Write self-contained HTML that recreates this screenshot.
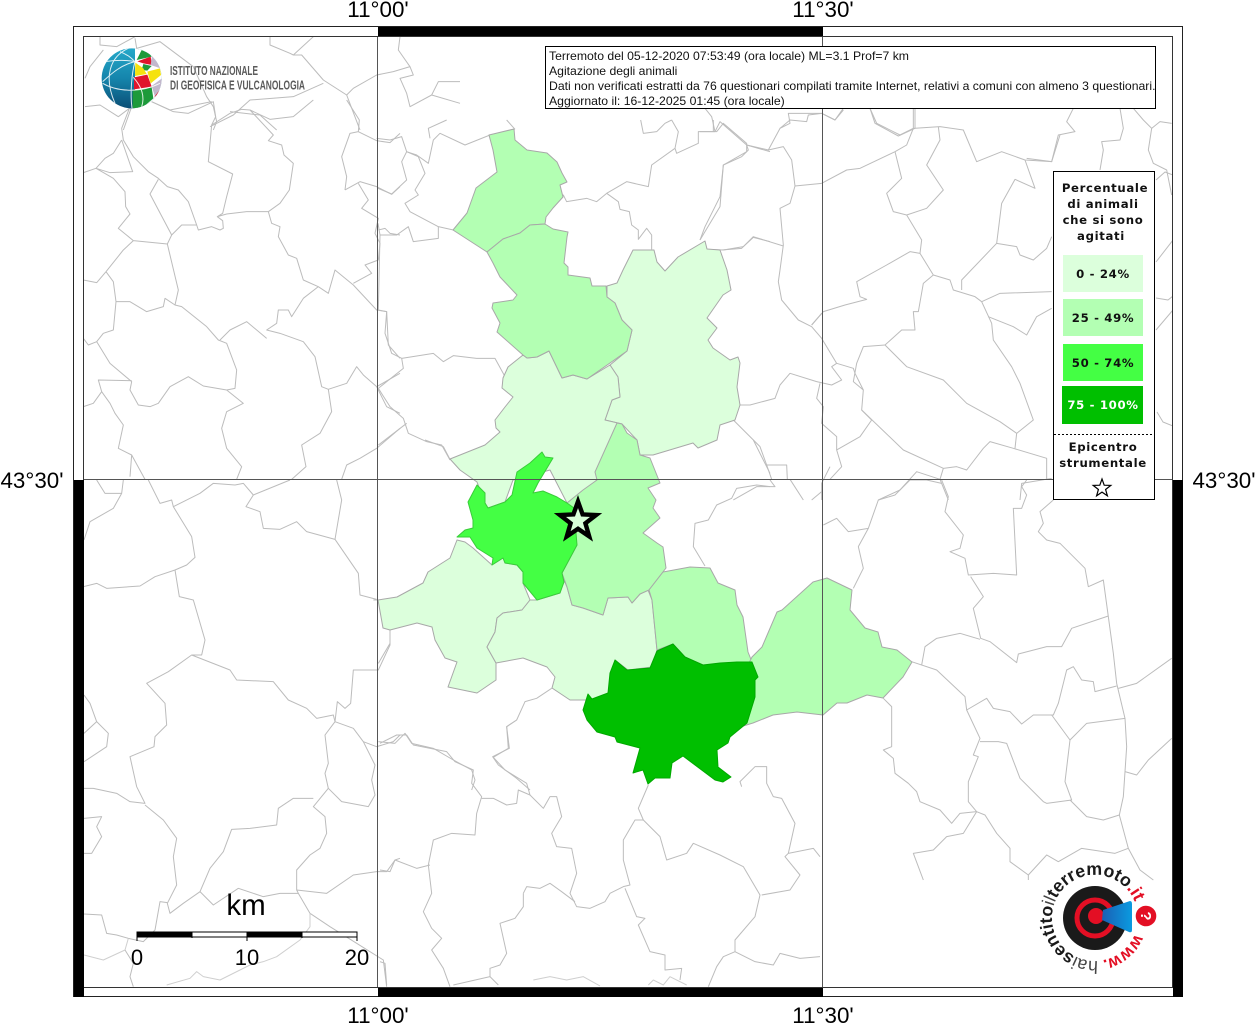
<!DOCTYPE html>
<html><head><meta charset="utf-8"><style>
html,body{margin:0;padding:0;background:#fff}
svg{display:block}
.b{fill:none;stroke:#bcbcbc;stroke-width:1;stroke-linejoin:round}
.b path{vector-effect:non-scaling-stroke}
.p{stroke:#a8a8a8;stroke-width:1;stroke-linejoin:round}
.l{font-family:"Liberation Sans",sans-serif;fill:#000}
.t{font-family:"Liberation Sans",sans-serif;font-size:12.22px;fill:#111}
.g{font-family:"DejaVu Sans",sans-serif;font-weight:bold;font-size:11.7px;letter-spacing:.65px;fill:#111;text-anchor:middle}
</style></head><body>
<svg width="1256" height="1024" viewBox="0 0 1256 1024" xmlns="http://www.w3.org/2000/svg">
<defs>
<clipPath id="m"><rect x="84" y="37" width="1089" height="950"/></clipPath>
<clipPath id="sc"><circle cx="215" cy="235" r="90"/></clipPath>
<linearGradient id="bl" x1="0" y1="0" x2="0" y2="1"><stop offset="0" stop-color="#25a8c9"/><stop offset=".5" stop-color="#1585ac"/><stop offset="1" stop-color="#0b4f76"/></linearGradient>
<linearGradient id="cone" x1="0" y1="0" x2="1" y2="0"><stop offset="0" stop-color="#1a5fb4"/><stop offset="1" stop-color="#0a9be0"/></linearGradient>
<path id="arc" d="M1136.5 929A43 43 0 1 1 1137.3 910.5"/>
</defs>
<rect width="1256" height="1024" fill="#fff"/>
<g clip-path="url(#m)">
<g class="b" transform="translate(80,100) scale(.33333)">
<path d="M150,20 125,85 130,120 160,170 205,215 235,235 262,260 295,270 325,305 350,375 355,390 395,380 420,390 430,385 428,362 412,350 440,342 500,335 565,335 600,310 628,270 640,190 612,165 605,135 565,122 580,105 510,30 485,28 450,40 395,75 385,185 458,222 440,290 428,340 412,350"/>
<path d="M215,5 280,35 325,40 400,5 407,50 395,75"/>
<path d="M510,30 570,58 640,50 700,0"/>
<path d="M125,120 100,160 75,175 48,205 10,218"/>
<path d="M125,120 158,215 90,218 48,205 100,235 135,275 137,320 150,342 115,385 160,422 262,432 275,405 305,375 350,375"/>
<path d="M235,238 210,282 230,320 275,405"/>
<path d="M160,422 130,450 78,515 50,548 10,540"/>
<path d="M262,432 295,570 285,615 305,620 380,680 415,720 440,730 470,810 465,865 440,870"/>
<path d="M78,515 100,545 108,605 150,605 200,635 250,620 255,595 285,615"/>
<path d="M108,605 100,690 70,700 50,725 25,735 10,715"/>
<path d="M50,725 90,790 155,845 150,870 175,915 210,920 235,910 270,860 325,830 370,858 440,870 490,910 440,935 425,985 440,1045 485,1100 470,1138"/>
<path d="M155,842 55,840 65,875 90,910 105,940 130,975 115,1045 155,1065 195,1138"/>
<path d="M65,875 40,910 10,920"/>
<path d="M155,1065 150,1130"/>
<path d="M565,335 575,370 600,380 595,410 625,465 650,475 670,540 715,560 745,580 765,510 820,555 890,630 920,635 925,735 960,775"/>
<path d="M715,560 670,595 635,650 625,630 595,630 590,670 560,690 600,700 670,725 705,770 725,860 745,868 800,850 830,800 850,825 890,860 960,820"/>
<path d="M420,720 450,690 500,665 560,715"/>
<path d="M745,868 755,935 720,1000 665,1035 678,1100 635,1138"/>
<path d="M890,860 920,920 960,940"/>
<path d="M890,1045 840,1075 800,1095 785,1138"/>
<path d="M890,1045 960,985"/>
<path d="M800,0 838,60 835,95 810,100 785,170 800,230 795,270"/>
<path d="M835,95 890,122 930,128 960,100"/>
<path d="M795,270 840,245 890,260 935,283 960,260"/>
<path d="M835,250 865,300 845,325 895,355 885,400 900,430 895,480 855,495 875,520 820,550"/>
<path d="M895,390 915,385 930,400 960,405"/>
</g>
<g class="b" transform="translate(80,480) scale(.33333)">
<path d="M50,0 75,40 125,40 130,0"/>
<path d="M125,40 100,85 30,125 12,180"/>
<path d="M205,0 240,70 275,60 280,80 335,170 345,232 320,255 285,270 225,290 180,318 80,325 50,310 10,320"/>
<path d="M280,80 360,40 400,10 465,15 490,10 520,45 630,0"/>
<path d="M520,45 498,80 540,95 550,145 600,148 650,125 680,155 765,178 785,60 770,0"/>
<path d="M765,178 835,280 840,345 890,358"/>
<path d="M285,270 298,350 340,360 375,480 365,525 335,525 265,575 200,610 255,670 260,735 225,770 222,800 150,830 170,920 195,970 150,965 110,940 40,925 10,925"/>
<path d="M335,525 450,570 470,600 580,605 625,660 680,685 710,715 760,705 765,725"/>
<path d="M930,450 930,495 895,570 820,570 812,670 795,685 772,665 765,725"/>
<path d="M765,725 735,765 745,850 735,880 745,925 785,965 865,980 885,945 875,900 885,855 850,785 820,745 765,725"/>
<path d="M850,785 890,800 940,785 960,765"/>
<path d="M745,925 700,980 735,1010 740,1060 720,1105 690,1125 650,1170 650,1230 655,1240 600,1240 550,1250 475,1225 400,1275 360,1235 310,1270 270,1300 262,1270 290,1215 280,1130 290,1075 250,1020 195,975"/>
<path d="M700,955 640,955 595,985 590,1035 510,1045 455,1048 430,1115 390,1165 360,1235"/>
<path d="M650,1230 740,1240 820,1185 890,1175 920,1175 945,1140 960,1135"/>
<path d="M655,1240 690,1300 750,1340 830,1390 910,1440 920,1520"/>
<path d="M690,1300 690,1340 660,1380 590,1430 550,1445 510,1455 420,1500 370,1490 350,1475 330,1495 260,1515" style="stroke:#cfcfcf"/>
<path d="M262,1268 240,1265 225,1350 190,1385 145,1375 110,1365 80,1360 65,1305 12,1302"/>
<path d="M145,1375 135,1410 70,1440 12,1425" style="stroke:#cfcfcf"/>
<path d="M135,1410 160,1450 150,1490 160,1520"/>
<path d="M12,645 30,670 50,725 85,760 80,800 12,845"/>
<path d="M50,725 12,760"/>
<path d="M12,1015 65,1010 50,1040 65,1070 35,1120 12,1120"/>
</g>
<g class="b" transform="translate(370,120) scale(.33333)">
<path d="M20,55 60,60 95,50 110,95 145,110 165,160 135,210 145,225 105,250 120,275 205,320 250,330"/>
<path d="M360,45 285,75 210,40 190,60 175,130 140,105 110,95 95,125 110,180 65,222 24,205"/>
<path d="M205,320 205,355 130,365 115,320 80,345 30,345 24,310"/>
<path d="M30,345 25,570 50,575 45,640 65,700 95,715 190,700 220,725 250,707 320,715 375,715 405,770"/>
<path d="M95,715 100,745 25,805"/>
<path d="M25,805 60,860 100,895 115,940 170,965 215,975 240,1020"/>
<path d="M110,910 25,975"/>
<path d="M435,28 410,0"/>
<path d="M180,55 175,25 230,0"/>
<path d="M528,290 580,225 590,245 650,235 680,245 710,220 745,245 750,268 778,275 785,315 805,330 805,358 830,325 845,345 845,388"/>
<path d="M710,220 770,185 835,200 845,135 915,85 925,35 905,0"/>
<path d="M915,85 920,100 985,70 985,35 1040,35 1060,10 1130,70 1130,95 1060,135 1050,260 990,360"/>
<path d="M1130,75 1200,95"/>
<path d="M1010,388 1060,390 1120,380 1150,352 1200,365"/>
<path d="M812,0 820,40 860,35 885,10 905,0"/>
<path d="M1030,35 1030,0"/>
</g>
<g class="b" transform="translate(60,0) scale(.33333)">
<path d="M120,110 120,135 170,140 225,110"/>
<path d="M225,115 230,145 300,125 400,200 440,290 460,320 470,365 460,390"/>
<path d="M630,110 630,135 690,160 700,165 760,110"/>
<path d="M700,165 725,165 790,240 860,285 900,390"/>
<path d="M860,285 880,265 950,225 1000,215 1050,200 1015,150 1020,110"/>
<path d="M1050,200 1060,225 1020,235 1040,280 1050,320 1115,285 1200,310"/>
<path d="M1115,285 1135,245 1200,245"/>
<path d="M790,250 700,290 570,300 520,345 450,380"/>
<path d="M510,335 600,345 650,390"/>
<path d="M275,305 330,330 455,305"/>
<path d="M75,320 120,315 175,350 215,320 190,390"/>
<path d="M130,150 90,200 75,235"/>
</g>
<g class="b" transform="translate(370,440) scale(.33333)">
<path d="M165,0 220,20 240,58"/>
<path d="M25,480 10,480"/>
<path d="M60,570 60,610 25,670"/>
<path d="M545,745 500,775 465,785 440,840 410,860 418,925 368,950 385,975 440,1015 480,1050"/>
<path d="M25,905 75,910 105,880 125,910 190,925 250,960 305,990 315,1020 305,1050"/>
<path d="M1150,0 1200,100"/>
<path d="M1005,378 970,320 975,250 1015,240 1040,195 1085,175 1100,145 1160,135 1200,140"/>
</g>
<g class="b" transform="translate(700,100) scale(.33333)">
<path d="M0,95 45,95 35,50 15,25"/>
<path d="M45,95 60,65 140,135 145,150 125,170 70,195 60,290 15,380 0,420"/>
<path d="M140,135 205,150 250,140 275,180 285,258 365,250"/>
<path d="M205,150 240,85 270,70 265,40 365,40 405,60 430,25"/>
<path d="M285,258 270,310 240,325 250,435 240,510 235,545 245,600 295,660 335,680 365,715 410,790 460,805 465,820 490,870 485,930 515,960 480,1010 410,1050 425,1100 390,1138"/>
<path d="M335,675 365,640"/>
<path d="M65,450 125,445 160,410 250,438"/>
<path d="M365,250 440,210 480,205 585,155 620,135 640,85 720,80 790,90 830,185 905,155 975,180 1055,185 1080,105"/>
<path d="M640,85 640,25"/>
<path d="M640,85 600,105 530,70 510,25"/>
<path d="M585,155 605,235 560,280 580,335 620,345 665,420 660,460 700,525 670,550 655,635 640,635 645,690 605,690 555,735 620,800 730,840 800,910 900,965 950,1000 1000,960 960,850 935,800 880,720 875,670 845,605 825,590 760,570 750,540 700,525"/>
<path d="M620,345 680,325 730,270 680,195 720,120 715,80"/>
<path d="M660,460 630,455 560,495 470,545 480,590 500,598 435,615 370,635 335,675"/>
<path d="M845,605 900,580 1055,575"/>
<path d="M785,570 785,540 890,430 905,310 945,238 1005,265 975,180"/>
<path d="M890,430 950,440 960,465 1000,480 1040,445 1055,410"/>
<path d="M865,650 940,680 980,705 1010,650 1055,625"/>
<path d="M555,735 490,740 470,790 460,845 490,870"/>
<path d="M410,790 395,800 425,840 395,855 350,845 270,820 240,855 225,895 150,915 120,915"/>
<path d="M360,850 350,895 370,920 365,970 410,1010 410,1050"/>
<path d="M485,930 610,1050 730,1105 770,1100 800,1110 850,1045 870,1025 940,1045 1040,1075 1040,1138"/>
<path d="M950,1000 945,1045"/>
<path d="M100,960 180,1040 200,1095 260,1095 262,1138"/>
<path d="M200,1095 215,1138"/>
<path d="M730,1105 720,1138 650,1115 600,1170 535,1200"/>
<path d="M720,1138 745,1200"/>
<path d="M210,1140 225,1160 170,1160 100,1200"/>
<path d="M270,1138 310,1200"/>
<path d="M390,1100 365,1150 365,1200"/>
<path d="M335,1200 365,1175"/>
<path d="M960,1200 965,1150 1055,1135"/>
</g>
<g class="b" transform="translate(780,100) scale(.33333)">
<path d="M0,85 30,60 80,65 85,45 125,40 165,60 190,30"/>
<path d="M270,25 285,70 355,108 405,85 405,25"/>
<path d="M880,25 860,65 885,95 835,105 815,185 740,175"/>
<path d="M1020,25 1030,85 1020,120 965,125 970,150 960,210"/>
<path d="M1060,25 1090,60 1115,85 1105,150 1120,190 1160,210 1175,285"/>
<path d="M1115,85 1140,65 1175,70"/>
</g>
<g class="b">
<path d="M1156,262 1173,240"/>
<path d="M1156,298 1168,300 1173,296"/>
<path d="M1157,412 1163,422 1173,426"/>
<path d="M1156,330 1173,310"/>
<path d="M1156,180 1165,172 1173,175"/>
</g>
<g class="b" transform="translate(820,480) scale(.33333)">
<path d="M365,0 385,50 375,95 430,165 420,205 390,215 435,235 445,285 520,280 590,285 580,85 605,85 620,45 605,20 620,0"/>
<path d="M452,290 490,350 460,385 482,475 510,485 590,548 595,522 680,500 725,500 755,445 865,408"/>
<path d="M100,325 130,265 115,200 145,145 85,155 50,115 10,135"/>
<path d="M145,145 175,60 225,45 270,0 320,0 365,10"/>
<path d="M700,60 660,95 670,130 655,155 680,180 720,190 795,265 805,320 850,300 880,520 890,610 915,715 920,800 910,950 898,1005 925,1105 960,1170 1000,1200"/>
<path d="M890,618 825,635 820,605 785,600 760,560 740,570 715,670 700,705 640,705 605,732 570,695 520,685 500,655 440,690 435,650 350,570 275,545"/>
<path d="M305,555 315,500 350,475 420,460 480,478"/>
<path d="M895,625 950,610 1055,535"/>
<path d="M915,875 950,885 985,840 1055,775"/>
<path d="M695,705 750,780 735,905 755,960 680,970 670,965 600,895 560,790 535,785 480,785"/>
<path d="M440,690 480,775 460,825 475,830 445,905 445,965 470,995 495,1005 530,1060 570,1105 570,1145 625,1185 625,1200"/>
<path d="M470,995 420,1000 395,1030 360,990 300,965 290,935 265,910 225,880 220,835 190,810 215,800 215,680 190,655"/>
<path d="M750,780 800,730 915,715"/>
<path d="M750,960 800,1010 850,1020 898,1005"/>
<path d="M470,995 430,1060 380,1070 340,1110 280,1120 310,1200"/>
<path d="M625,1185 680,1125 715,1145 785,1105 885,1120 925,1105"/>
</g>
<g class="b" transform="translate(380,720) scale(.33333)">
<path d="M0,70 50,45 80,45 100,75 200,95 225,125 280,150 275,190 305,230 290,280 285,345 215,340 160,360 145,435 155,520 130,575 155,625 185,655 155,690 190,745 210,800"/>
<path d="M410,0 380,20 385,85 340,112 375,150 440,190 450,225 490,265 510,230 530,230 545,290 515,340 530,380 575,385 590,460 570,520 590,560 630,565 675,545 690,520 730,500 750,495 730,420 730,360 765,300 790,300"/>
<path d="M805,195 775,265 790,300 840,350 860,420 920,400 940,370 1020,405 1090,440 1140,525 1125,590 1065,660 1065,695 1030,710 1010,740 985,800"/>
<path d="M1085,200 1080,185 1125,140 1160,140 1160,190 1180,230 1205,235 1245,310 1225,400 1215,410 1260,465 1230,510 1145,525"/>
<path d="M1225,400 1300,385 1320,410"/>
<path d="M1065,695 1125,725 1180,735 1200,700 1260,715 1320,710"/>
<path d="M305,235 340,235 380,255 410,250 415,210 450,225"/>
<path d="M150,435 110,445 45,420 30,455 0,450"/>
<path d="M430,520 440,500 480,505 510,490 545,515 585,545"/>
<path d="M430,520 430,560 405,595 360,610 380,700 360,735 330,745 330,770 220,795"/>
<path d="M735,505 770,590 795,595 775,615 810,695 855,705 855,750 905,745 900,780"/>
<path d="M330,770 355,795"/>
<path d="M460,780 510,770 560,780 610,770 660,798" style="stroke:#cfcfcf"/>
<path d="M805,795 820,780 850,795 870,770 920,795" style="stroke:#cfcfcf"/>
<path d="M0,725 15,730 20,795"/>
</g>
<!-- filled comuni -->
<polygon class="p" fill="#b3ffb3" points="489,135 514,129 515,140 527,150 547,153 557,162 562,173 567,182 560,185 563,197 553,208 546,217 545,224 530,225 520,233 503,239 487,252 453,230 467,213 476,188 497,172 493,150"/>
<polygon class="p" fill="#dcffdc" points="607,286 617,283 623,270 633,250 654,250 657,262 665,271 678,257 705,241 707,249 720,250 727,270 731,290 723,295 707,318 717,328 708,340 713,348 730,360 738,357 740,363 737,387 740,405 735,420 720,425 717,440 698,448 693,443 653,455 640,455 637,440 622,424 605,420 612,400 620,397 618,377 610,365 627,351 632,330 622,320 615,303 607,297"/>
<polygon class="p" fill="#dcffdc" points="523,355 508,367 503,378 502,388 513,397 505,407 495,420 496,428 500,432 485,445 450,459 460,470 477,482 485,503 488,508 505,502 513,480 550,470 567,503 585,490 597,480 596,472 620,443 622,424 605,420 612,400 620,397 618,377 610,365 587,379 573,375 562,378 549,351 537,357 527,358"/>
<polygon class="p" fill="#b3ffb3" points="545,224 530,225 520,233 503,239 487,252 493,263 500,277 517,295 513,300 493,303 492,308 500,323 497,332 523,355 527,358 537,357 549,351 562,378 573,375 587,379 610,363 627,351 632,330 622,320 615,303 607,297 606,286 592,286 590,278 568,275 568,267 564,263 567,237 568,232 553,229"/>
<polygon class="p" fill="#dcffdc" points="378,600 397,597 423,583 428,572 450,558 457,540 465,542 473,548 492,565 503,558 505,563 517,565 523,572 523,583 530,600 522,610 503,613 497,618 495,632 487,647 496,663 496,680 477,693 448,687 457,662 445,658 435,640 432,627 417,623 390,630 383,628"/>
<polygon class="p" fill="#dcffdc" points="530,600 537,600 560,593 564,580 567,587 572,605 583,608 603,615 608,598 628,597 632,603 640,594 648,590 652,600 655,630 657,650 652,667 628,670 615,660 610,693 593,700 570,700 552,688 555,677 547,667 523,658 496,663 487,647 495,632 497,618 503,613 522,610"/>
<polygon class="p" fill="#b3ffb3" points="617,423 622,424 627,433 637,440 640,455 650,458 660,483 648,488 656,500 653,508 660,518 643,533 657,543 663,547 666,568 649,590 640,594 632,603 628,597 608,598 603,615 583,608 572,605 567,587 562,573 577,545 567,503 583,490 597,480 595,472"/>
<polygon class="p" fill="#44ff44" style="stroke:#3acc3a" points="542,452 545,457 553,458 547,468 538,483 533,493 543,491 557,497 567,503 574,508 577,545 562,573 564,582 560,593 537,600 523,583 523,572 517,565 505,563 503,558 492,565 493,558 477,548 470,537 457,537 465,530 473,528 473,520 468,502 477,485 485,493 485,503 488,508 505,502 512,495 517,472 530,463"/>
<polygon class="p" fill="#b3ffb3" points="649,590 663,572 690,567 710,568 718,583 735,590 737,605 743,617 748,652 752,662 703,665 685,657 673,644 657,650 655,630 652,600"/>
<polygon class="p" fill="#b3ffb3" points="752,657 762,647 777,612 782,610 813,582 827,578 852,590 850,610 865,628 878,632 882,647 897,650 912,662 903,677 883,698 867,695 847,703 837,703 823,715 797,712 773,715 753,723 740,727 725,725 748,665"/>
<polygon class="p" fill="#00bf00" style="stroke:#00a800" points="615,660 627,670 650,668 657,651 673,644 685,657 703,665 720,663 737,662 752,662 758,677 755,680 755,697 747,723 730,737 728,743 717,750 718,767 731,777 723,782 715,780 683,756 672,763 670,778 655,778 648,784 643,770 633,773 640,748 617,742 615,737 597,732 587,720 583,710 588,694 592,699 608,693 610,673"/>
<!-- grid -->
<path d="M377.5 37V987M822.5 37V987M84 479.5H1173" stroke="#555" stroke-width="1" fill="none"/>
</g>
<!-- big star -->
<polygon points="578,501.5 582.6,514.4 596.1,515 585.4,523.3 589.2,536.4 578,528.8 566.8,536.4 570.6,523.3 559.9,515 573.4,514.4" fill="#d8ffd8" stroke="#000" stroke-width="4.4" stroke-miterlimit="10"/>
<!-- frame -->
<rect x="73.5" y="26.5" width="1109" height="970" fill="none" stroke="#222" stroke-width="1"/>
<rect x="83.5" y="36.5" width="1089" height="951" fill="none" stroke="#333" stroke-width="1"/>
<rect x="378" y="27" width="445" height="9" fill="#000"/>
<rect x="378" y="988" width="445" height="9" fill="#000"/>
<rect x="74" y="480" width="10" height="517" fill="#000"/>
<rect x="1173" y="480" width="10" height="517" fill="#000"/>
<!-- labels -->
<g class="l" font-size="22.4" text-anchor="middle">
<text x="378" y="17">11°00'</text>
<text x="823" y="17">11°30'</text>
<text x="378" y="1023">11°00'</text>
<text x="823" y="1023">11°30'</text>
<text x="32" y="488">43°30'</text>
<text x="1224" y="488">43°30'</text>
</g>
<!-- info box -->
<rect x="545.5" y="46.5" width="610" height="62" fill="#fff" stroke="#000"/>
<text class="t" x="549" y="60">Terremoto del 05-12-2020 07:53:49 (ora locale) ML=3.1 Prof=7 km</text>
<text class="t" x="549" y="75">Agitazione degli animali</text>
<text class="t" x="549" y="90">Dati non verificati estratti da 76 questionari compilati tramite Internet, relativi a comuni con almeno 3 questionari.</text>
<text class="t" x="549" y="105">Aggiornato il: 16-12-2025 01:45 (ora locale)</text>
<!-- legend -->
<rect x="1053.5" y="171.5" width="101" height="328" fill="#fff" stroke="#000"/>
<text class="g" x="1105" y="192">Percentuale</text>
<text class="g" x="1103" y="208">di animali</text>
<text class="g" x="1103" y="224">che si sono</text>
<text class="g" x="1101" y="240">agitati</text>
<rect x="1063" y="255" width="80" height="37" fill="#dcffdc"/>
<rect x="1063" y="299" width="80" height="37" fill="#b3ffb3"/>
<rect x="1063" y="344" width="80" height="37" fill="#44ff44"/>
<rect x="1062" y="386" width="81" height="38" fill="#00bf00"/>
<text class="g" x="1103" y="278">0 - 24%</text>
<text class="g" x="1103" y="322">25 - 49%</text>
<text class="g" x="1103" y="367">50 - 74%</text>
<text class="g" x="1103" y="409" style="fill:#fff">75 - 100%</text>
<path d="M1054 434.5H1154" stroke="#000" stroke-dasharray="2 2" fill="none"/>
<text class="g" x="1103" y="451">Epicentro</text>
<text class="g" x="1103" y="467">strumentale</text>
<polygon points="1102,479 1104.2,485.2 1110.8,485.4 1105.6,489.5 1107.4,495.8 1102,492.1 1096.6,495.8 1098.4,489.5 1093.2,485.4 1099.8,485.2" fill="#fff" stroke="#000" stroke-width="1.2"/>
<!-- scale -->
<text class="l" x="246" y="915" font-size="29.5" text-anchor="middle">km</text>
<rect x="137" y="932" width="220" height="5" fill="#fff" stroke="#000" stroke-width="1"/>
<rect x="137" y="932" width="55" height="5" fill="#000"/>
<rect x="247" y="932" width="55" height="5" fill="#000"/>
<path d="M137 932V941M247 932V941M357 932V941M192 932V938M302 932V938" stroke="#000" fill="none"/>
<g class="l" font-size="22" text-anchor="middle">
<text x="137" y="965">0</text>
<text x="247" y="965">10</text>
<text x="357" y="965">20</text>
</g>
<!-- INGV logo -->
<g transform="translate(60,0) scale(.33333)">
<circle cx="215" cy="235" r="90" fill="url(#bl)"/>
<g clip-path="url(#sc)">
<rect x="225" y="145" width="90" height="180" fill="#fff"/>
<polygon fill="#1d9a3a" points="230,180 245,150 268,160 275,170"/>
<polygon fill="#e0142c" points="232,184 272,170 276,195 250,190"/>
<polygon fill="#1d9a3a" points="250,192 275,198 262,212 245,210"/>
<polygon fill="#f5e20f" points="226,188 250,205 260,222 225,228"/>
<polygon fill="#e0142c" points="222,232 262,224 275,260 222,268"/>
<polygon fill="#f5e20f" points="262,215 300,205 303,225 272,250"/>
<polygon fill="#c2b8cc" points="276,168 295,190 302,205 272,195"/>
<polygon fill="#c2b8cc" points="275,258 306,235 303,265 285,290"/>
<polygon fill="#1d9a3a" points="218,272 275,262 280,295 245,325 218,325"/>
<polygon fill="#e0142c" points="282,292 300,268 298,280"/>
<g fill="none" stroke="#fff" stroke-width="3" opacity=".85">
<path d="M205,145C150,170 130,230 165,310"/>
<path d="M225,185C180,195 150,225 128,245"/>
<path d="M180,155C205,165 215,175 225,185"/>
<path d="M225,185C215,220 210,280 216,325"/>
<path d="M135,185C170,180 200,180 228,185"/>
<path d="M128,250C170,275 240,280 300,250"/>
<path d="M220,232C245,260 255,290 245,320"/>
</g>
</g>
</g>
<g font-family="&quot;Liberation Sans&quot;,sans-serif" font-size="12.5" font-weight="bold" fill="#5a5a5a">
<text x="170" y="75" textLength="88" lengthAdjust="spacingAndGlyphs">ISTITUTO NAZIONALE</text>
<text x="170" y="89.5" textLength="135" lengthAdjust="spacingAndGlyphs">DI GEOFISICA E VULCANOLOGIA</text>
</g>
<!-- HSIT logo -->
<circle cx="1095" cy="918" r="32" fill="#1a1a1a"/>
<circle cx="1095" cy="918" r="18" fill="none" stroke="#e30f24" stroke-width="5"/>
<circle cx="1096" cy="916" r="8" fill="#e30f24"/>
<path d="M1103 910L1130 901Q1132 901 1132 904L1132 930Q1132 933 1129 932L1102 920Z" fill="url(#cone)"/>
<circle cx="1146" cy="916" r="10.3" fill="#e30f24"/>
<text transform="translate(1146,916) rotate(90)" x="0" y="5" text-anchor="middle" font-family="&quot;Liberation Sans&quot;,sans-serif" font-weight="bold" font-size="15" fill="#fff">?</text>
<g font-family="&quot;Liberation Sans&quot;,sans-serif" font-size="17.8" fill="#1a1a1a">
<text font-weight="bold" fill="#e30f24" font-size="17"><textPath href="#arc" startOffset="5">www.</textPath></text>
<text><textPath href="#arc" startOffset="53"><tspan fill="#444" font-weight="normal">hai</tspan><tspan font-weight="bold">sentito</tspan><tspan fill="#444" font-weight="normal">il</tspan><tspan font-weight="bold">terremoto</tspan><tspan font-weight="bold" fill="#e30f24">.it</tspan></textPath></text>
</g>
</svg>
</body></html>
